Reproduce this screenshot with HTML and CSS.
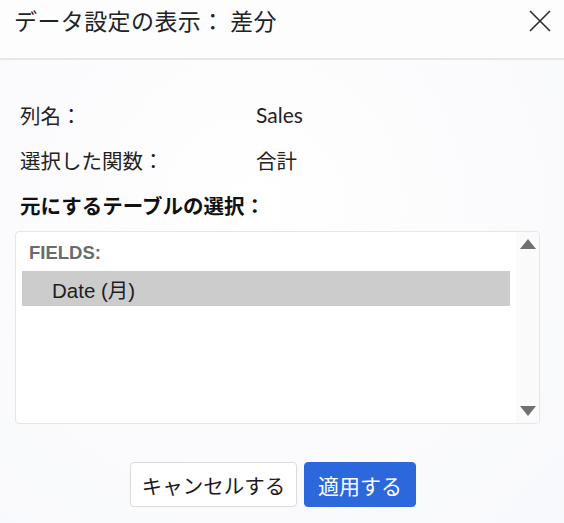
FILE: index.html
```html
<!DOCTYPE html>
<html lang="ja">
<head>
<meta charset="utf-8">
<title>データ設定の表示</title>
<link rel="stylesheet" href="styles.css">
</head>
<body>
<div class="dialog">
  <header class="header">
    <h1 class="title">データ設定の表示： 差分</h1>
    <button class="close" aria-label="閉じる">
      <svg width="22" height="22" viewBox="0 0 22 22"><path d="M1 1 L21 21 M21 1 L1 21" stroke="#2b2b2b" stroke-width="1.6" fill="none"/></svg>
    </button>
  </header>
  <main class="body">
    <div class="row"><span class="label">列名：</span><span class="value latin">Sales</span></div>
    <div class="row"><span class="label">選択した関数：</span><span class="value">合計</span></div>
    <div class="row strong">元にするテーブルの選択：</div>
    <div class="listbox">
      <div class="list">
        <div class="group">FIELDS:</div>
        <div class="item selected">Date (月)</div>
      </div>
      <div class="scrollbar">
        <span class="arrow up"></span>
        <span class="arrow down"></span>
      </div>
    </div>
  </main>
  <footer class="footer">
    <button class="btn cancel">キャンセルする</button>
    <button class="btn apply">適用する</button>
  </footer>
</div>
</body>
</html>
```
FILE: styles.css
```css
html, body {
  margin: 0;
  padding: 0;
}
body {
  width: 564px;
  height: 523px;
  overflow: hidden;
  background: radial-gradient(ellipse at 45% 40%, #ffffff 0%, #fbfbfd 55%, #f8f9fc 100%);
  font-family: "Noto Sans CJK JP", "Noto Sans", sans-serif;
  color: #1a1a1a;
}
.dialog {
  display: flex;
  flex-direction: column;
}
.header {
  height: 60px;
  box-sizing: border-box;
  display: flex;
  align-items: flex-start;
  justify-content: space-between;
  padding: 8px 13px 0 14px;
  border-bottom: 2px solid #e7e7e9;
  background: #fdfdfe;
}
.title {
  margin: 0;
  font-size: 23px;
  letter-spacing: 0.4px;
  font-weight: 400;
  color: #222;
  line-height: 24px;
  padding-top: 0;
}
.close {
  border: 0;
  background: transparent;
  padding: 0;
  margin-top: 2px;
  width: 22px;
  height: 22px;
  cursor: pointer;
}
.close svg { display: block; }
.body {
  padding: 32px 24px 0 15px;
}
.row {
  display: flex;
  height: 45px;
  align-items: center;
  padding-left: 5px;
  font-size: 20.5px;
  color: #222;
}
.label {
  width: 236px;
}
.value.latin {
  font-family: Lato, "Noto Sans", sans-serif;
  font-size: 21px;
}
.strong {
  font-weight: 700;
  color: #111;
}
.listbox {
  margin-top: 4px;
  height: 193px;
  box-sizing: border-box;
  border: 1px solid #e6e6e8;
  border-radius: 4px;
  background: #ffffff;
  display: flex;
}
.list {
  flex: 1;
  padding-top: 9px;
}
.group {
  font-family: "Liberation Sans", Arial, sans-serif;
  font-weight: 700;
  font-size: 18.5px;
  color: #6b6b6b;
  line-height: 24px;
  padding-left: 13px;
  margin-bottom: 6px;
}
.item {
  margin: 0 6px;
  height: 35px;
  display: flex;
  align-items: center;
  padding-left: 30px;
  font-family: "Liberation Sans", "Noto Sans CJK JP", Arial, sans-serif;
  font-size: 20.5px;
  color: #1e1e1e;
}
.selected {
  background: #cccccc;
}
.scrollbar {
  width: 23px;
  background: #fafafa;
  display: flex;
  flex-direction: column;
  justify-content: space-between;
  align-items: center;
  padding: 7px 0 7px;
  border-radius: 0 4px 4px 0;
}
.arrow {
  width: 0;
  height: 0;
  border-left: 8px solid transparent;
  border-right: 8px solid transparent;
}
.arrow.up {
  border-bottom: 10px solid #707070;
}
.arrow.down {
  border-top: 10px solid #707070;
}
.footer {
  display: flex;
  justify-content: center;
  gap: 7px;
  padding: 38px 18px 0 0;
}
.btn {
  height: 45px;
  box-sizing: border-box;
  border-radius: 4px;
  font-family: "Noto Sans CJK JP", sans-serif;
  font-size: 20.5px;
  padding: 0;
  cursor: pointer;
}
.cancel {
  width: 167px;
  background: #ffffff;
  border: 1px solid #dcdcdf;
  color: #1a1a1a;
}
.apply {
  width: 112px;
  background: #2c68dc;
  border: 1px solid #2c68dc;
  color: #ffffff;
  font-size: 21px;
}
```
